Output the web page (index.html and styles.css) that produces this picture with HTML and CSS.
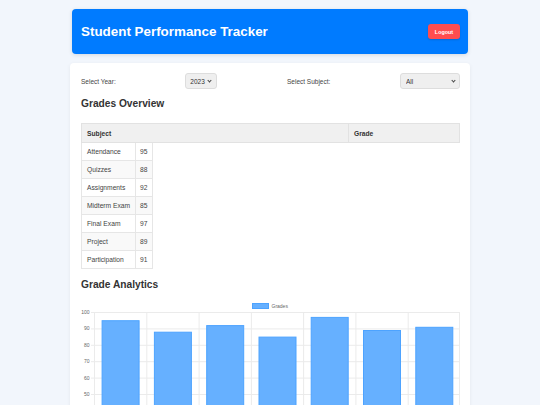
FILE: index.html
```html
<!DOCTYPE html>
<html lang="en">
<head>
    <meta charset="UTF-8">
    <meta name="viewport" content="width=device-width, initial-scale=1.0">
    <title>Student Performance Tracker</title>
    <link rel="stylesheet" href="styles.css">
</head>
<body>
    <div class="container">
        <header class="top-bar">
            <h1>Student Performance Tracker</h1>
            <button class="logout-btn">Logout</button>
        </header>

        <main class="card">
            <div class="filters">
                <label for="year">Select Year:</label>
                <span class="select-wrap year-select">
                    <select id="year">
                        <option>2023</option>
                        <option>2022</option>
                    </select>
                </span>
                <label for="subject">Select Subject:</label>
                <span class="select-wrap subject-select">
                    <select id="subject">
                        <option>All</option>
                    </select>
                </span>
            </div>

            <h2>Grades Overview</h2>
            <table class="grades-head">
                <tr>
                    <th class="col-subject">Subject</th>
                    <th>Grade</th>
                </tr>
            </table>
            <table class="grades-body">
                <tr><td>Attendance</td><td>95</td></tr>
                <tr><td>Quizzes</td><td>88</td></tr>
                <tr><td>Assignments</td><td>92</td></tr>
                <tr><td>Midterm Exam</td><td>85</td></tr>
                <tr><td>Final Exam</td><td>97</td></tr>
                <tr><td>Project</td><td>89</td></tr>
                <tr><td>Participation</td><td>91</td></tr>
            </table>

            <h2 class="analytics-title">Grade Analytics</h2>
            <div class="chart-box">
                <svg class="chart" width="379" height="200" viewBox="0 0 379 200">
                    <!-- leyenda -->
                    <rect x="171.5" y="7.5" width="16" height="5" fill="#66b0ff" stroke="#4da3ff" stroke-width="1"/>
                    <text x="190.5" y="12" class="legend-text">Grades</text>

                    <!-- lineas horizontales -->
                    <g stroke="#ebebeb" stroke-width="1">
                        <line x1="10" y1="16.5" x2="379" y2="16.5"/>
                        <line x1="10" y1="32.9" x2="379" y2="32.9"/>
                        <line x1="10" y1="49.3" x2="379" y2="49.3"/>
                        <line x1="10" y1="65.7" x2="379" y2="65.7"/>
                        <line x1="10" y1="82.1" x2="379" y2="82.1"/>
                        <line x1="10" y1="98.5" x2="379" y2="98.5"/>
                        <line x1="10" y1="114.9" x2="379" y2="114.9"/>
                        <line x1="10" y1="131.3" x2="379" y2="131.3"/>
                    </g>
                    <!-- lineas verticales -->
                    <g stroke="#ebebeb" stroke-width="1">
                        <line x1="13.5" y1="16" x2="13.5" y2="200"/>
                        <line x1="65.8" y1="16" x2="65.8" y2="200"/>
                        <line x1="118.1" y1="16" x2="118.1" y2="200"/>
                        <line x1="170.4" y1="16" x2="170.4" y2="200"/>
                        <line x1="222.6" y1="16" x2="222.6" y2="200"/>
                        <line x1="274.9" y1="16" x2="274.9" y2="200"/>
                        <line x1="327.2" y1="16" x2="327.2" y2="200"/>
                        <line x1="378.5" y1="16" x2="378.5" y2="200"/>
                    </g>

                    <!-- eje y -->
                    <g class="axis-text" text-anchor="end">
                        <text x="8.5" y="18">100</text>
                        <text x="8.5" y="34.4">90</text>
                        <text x="8.5" y="50.8">80</text>
                        <text x="8.5" y="67.2">70</text>
                        <text x="8.5" y="83.6">60</text>
                        <text x="8.5" y="100">50</text>
                    </g>

                    <!-- barras -->
                    <g fill="#66b0ff" stroke="#4da3ff" stroke-width="1">
                        <rect x="21.1" y="24.7" width="37" height="180"/>
                        <rect x="73.4" y="36.2" width="37" height="180"/>
                        <rect x="125.7" y="29.6" width="37" height="180"/>
                        <rect x="178" y="41.1" width="37" height="180"/>
                        <rect x="230.2" y="21.4" width="37" height="180"/>
                        <rect x="282.5" y="34.5" width="37" height="180"/>
                        <rect x="334.8" y="31.3" width="37" height="180"/>
                    </g>
                </svg>
            </div>
        </main>
    </div>
</body>
</html>
```

FILE: styles.css
```css
body{ /*cuerpo*/
    margin: 0;
    padding: 0;
    background-color: #f2f6fc;
    font-family: "Liberation Sans", Arial, sans-serif;
    color: #333333;
}
.container{
    width: 400px;
    margin: 0 auto;
    padding-top: 9px;
}
.top-bar{ /*barra azul*/
    margin: 0 2px 9px 2px;
    height: 45px;
    padding: 0 8px 0 9px;
    background-color: #007bff;
    border-radius: 4px;
    box-shadow: 0 1px 4px rgba(0, 0, 0, 0.12);
    display: flex;
    align-items: center;
    justify-content: space-between;
}
.top-bar h1{
    margin: 0;
    color: #ffffff;
    font-size: 13.4px;
    font-weight: bold;
}
.logout-btn{
    width: 32px;
    height: 15px;
    padding: 0;
    border: none;
    border-radius: 3px;
    background-color: #ff4d4f;
    color: #ffffff;
    font-family: "Liberation Sans", Arial, sans-serif;
    font-size: 5.4px;
    font-weight: bold;
    box-shadow: 0 1px 2px rgba(0, 0, 0, 0.15);
}
.card{ /*caja blanca*/
    background-color: #ffffff;
    border-radius: 4px;
    box-shadow: 0 1px 4px rgba(0, 0, 0, 0.06);
    padding: 10px 10px 20px 11px;
}
.filters{
    display: flex;
    justify-content: space-between;
    align-items: center;
    height: 16px;
}
.filters label{
    font-size: 6.5px;
    color: #444444;
}
.select-wrap{ /*caja del select con flecha*/
    position: relative;
    display: block;
    height: 16px;
}
.select-wrap::after{
    content: "";
    position: absolute;
    top: 6px;
    width: 2px;
    height: 2px;
    border-right: 1px solid #444444;
    border-bottom: 1px solid #444444;
    transform: rotate(45deg);
    pointer-events: none;
}
.select-wrap select{
    -webkit-appearance: none;
    appearance: none;
    display: block;
    box-sizing: border-box;
    width: 100%;
    height: 16px;
    margin: 0;
    font-family: "Liberation Sans", Arial, sans-serif;
    font-size: 6.5px;
    color: #333333;
    background-color: #efefef;
    border: 1px solid #dddddd;
    border-radius: 3px;
    padding: 0 0 0 4px;
}
.year-select{
    width: 32px;
}
.year-select::after{
    right: 6px;
}
.subject-select{
    width: 60px;
}
.subject-select select{
    padding-left: 5px;
}
.subject-select::after{
    right: 5px;
}
h2{
    margin: 9px 0 14px 0;
    font-size: 10.2px;
    font-weight: bold;
    color: #333333;
}
table{
    border-collapse: collapse;
    font-size: 6.7px;
    color: #444444;
}
.grades-head{
    width: 100%;
}
.grades-head th{
    height: 18px;
    padding: 0 5px;
    text-align: left;
    background-color: #f0f0f0;
    border: 1px solid #e2e2e2;
    color: #333333;
}
.grades-head .col-subject{
    width: 256px;
}
.grades-body td{
    height: 17px;
    padding: 0 5px;
    border: 1px solid #e6e6e6;
    border-top: none;
    white-space: nowrap;
}
.grades-body tr:nth-child(even) td{
    background-color: #f9f9f9;
}
.grades-body td:first-child{
    width: 43px;
}
.grades-body td:last-child{
    width: 8px;
    padding: 0 4px;
}
.analytics-title{
    margin: 10px 0 6px 0;
}
.chart-box{
    height: 200px;
}
.chart{
    display: block;
}
.legend-text, .axis-text{
    font-family: "Liberation Sans", Arial, sans-serif;
    font-size: 5px;
    fill: #666666;
}
```
